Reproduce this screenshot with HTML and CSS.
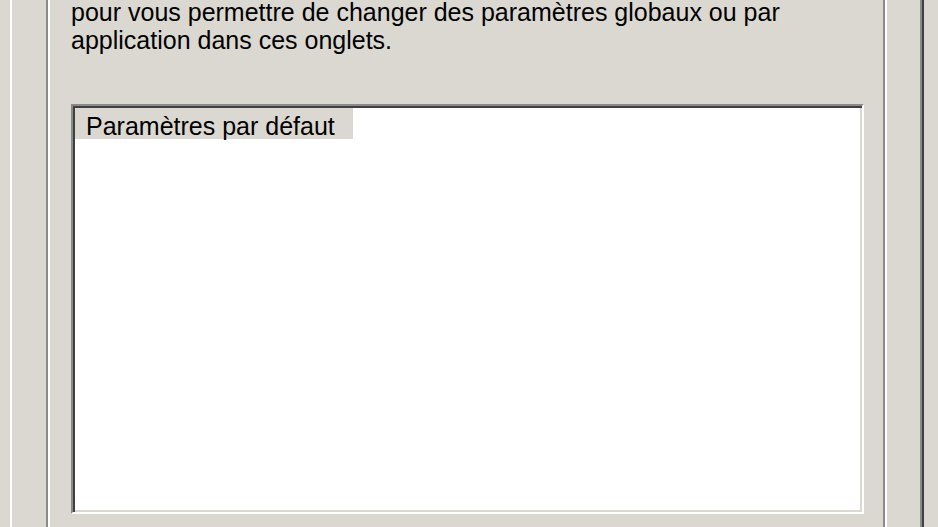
FILE: index.html
```html
<!DOCTYPE html>
<html lang="fr">
<head>
<meta charset="utf-8">
<title>Paramètres</title>
<link rel="stylesheet" href="styles.css">
</head>
<body>
<div class="tab">
  <div class="group">
    <p class="intro">pour vous permettre de changer des paramètres globaux ou par<br>application dans ces onglets.</p>
    <div class="list">
      <div class="item">Paramètres par défaut</div>
    </div>
  </div>
</div>
</body>
</html>
```
FILE: styles.css
```css
html, body {
  margin: 0;
  padding: 0;
  height: 527px;
  overflow: hidden;
  background: #dbd8d1;
}
body {
  font-family: "Liberation Sans", Arial, sans-serif;
  font-size: 25px;
  color: #000;
}
.tab {
  margin-left: 10px;
  width: 876px;
  height: 600px;
  border-left: 2px solid #ffffff;
  border-right: 2px solid #404040;
  box-shadow: inset -2px 0 0 #8a8a8a;
  padding-left: 34px;
  box-sizing: content-box;
}
.group {
  width: 841px;
  height: 600px;
  border-left: 2px solid #8a8a8a;
  border-right: 2px solid #ffffff;
  box-shadow: inset 2px 0 0 #ffffff, inset -2px 0 0 #8a8a8a;
  padding-left: 23px;
  box-sizing: border-box;
}
.intro {
  margin: -2px 0 0 0;
  line-height: 28px;
}
.list {
  margin-top: 50px;
  width: 793px;
  height: 410px;
  box-sizing: border-box;
  background: #ffffff;
  border: 2px solid;
  border-color: #8a8a8a #ffffff #ffffff #8a8a8a;
  box-shadow: inset 2px 2px 0 #404040, inset -2px -2px 0 #dbd8d1;
  padding: 2px;
}
.item {
  display: inline-block;
  background: #dbd8d1;
  padding: 6px 18px 0 11px;
  height: 31px;
  line-height: 25px;
  box-sizing: border-box;
}
```
